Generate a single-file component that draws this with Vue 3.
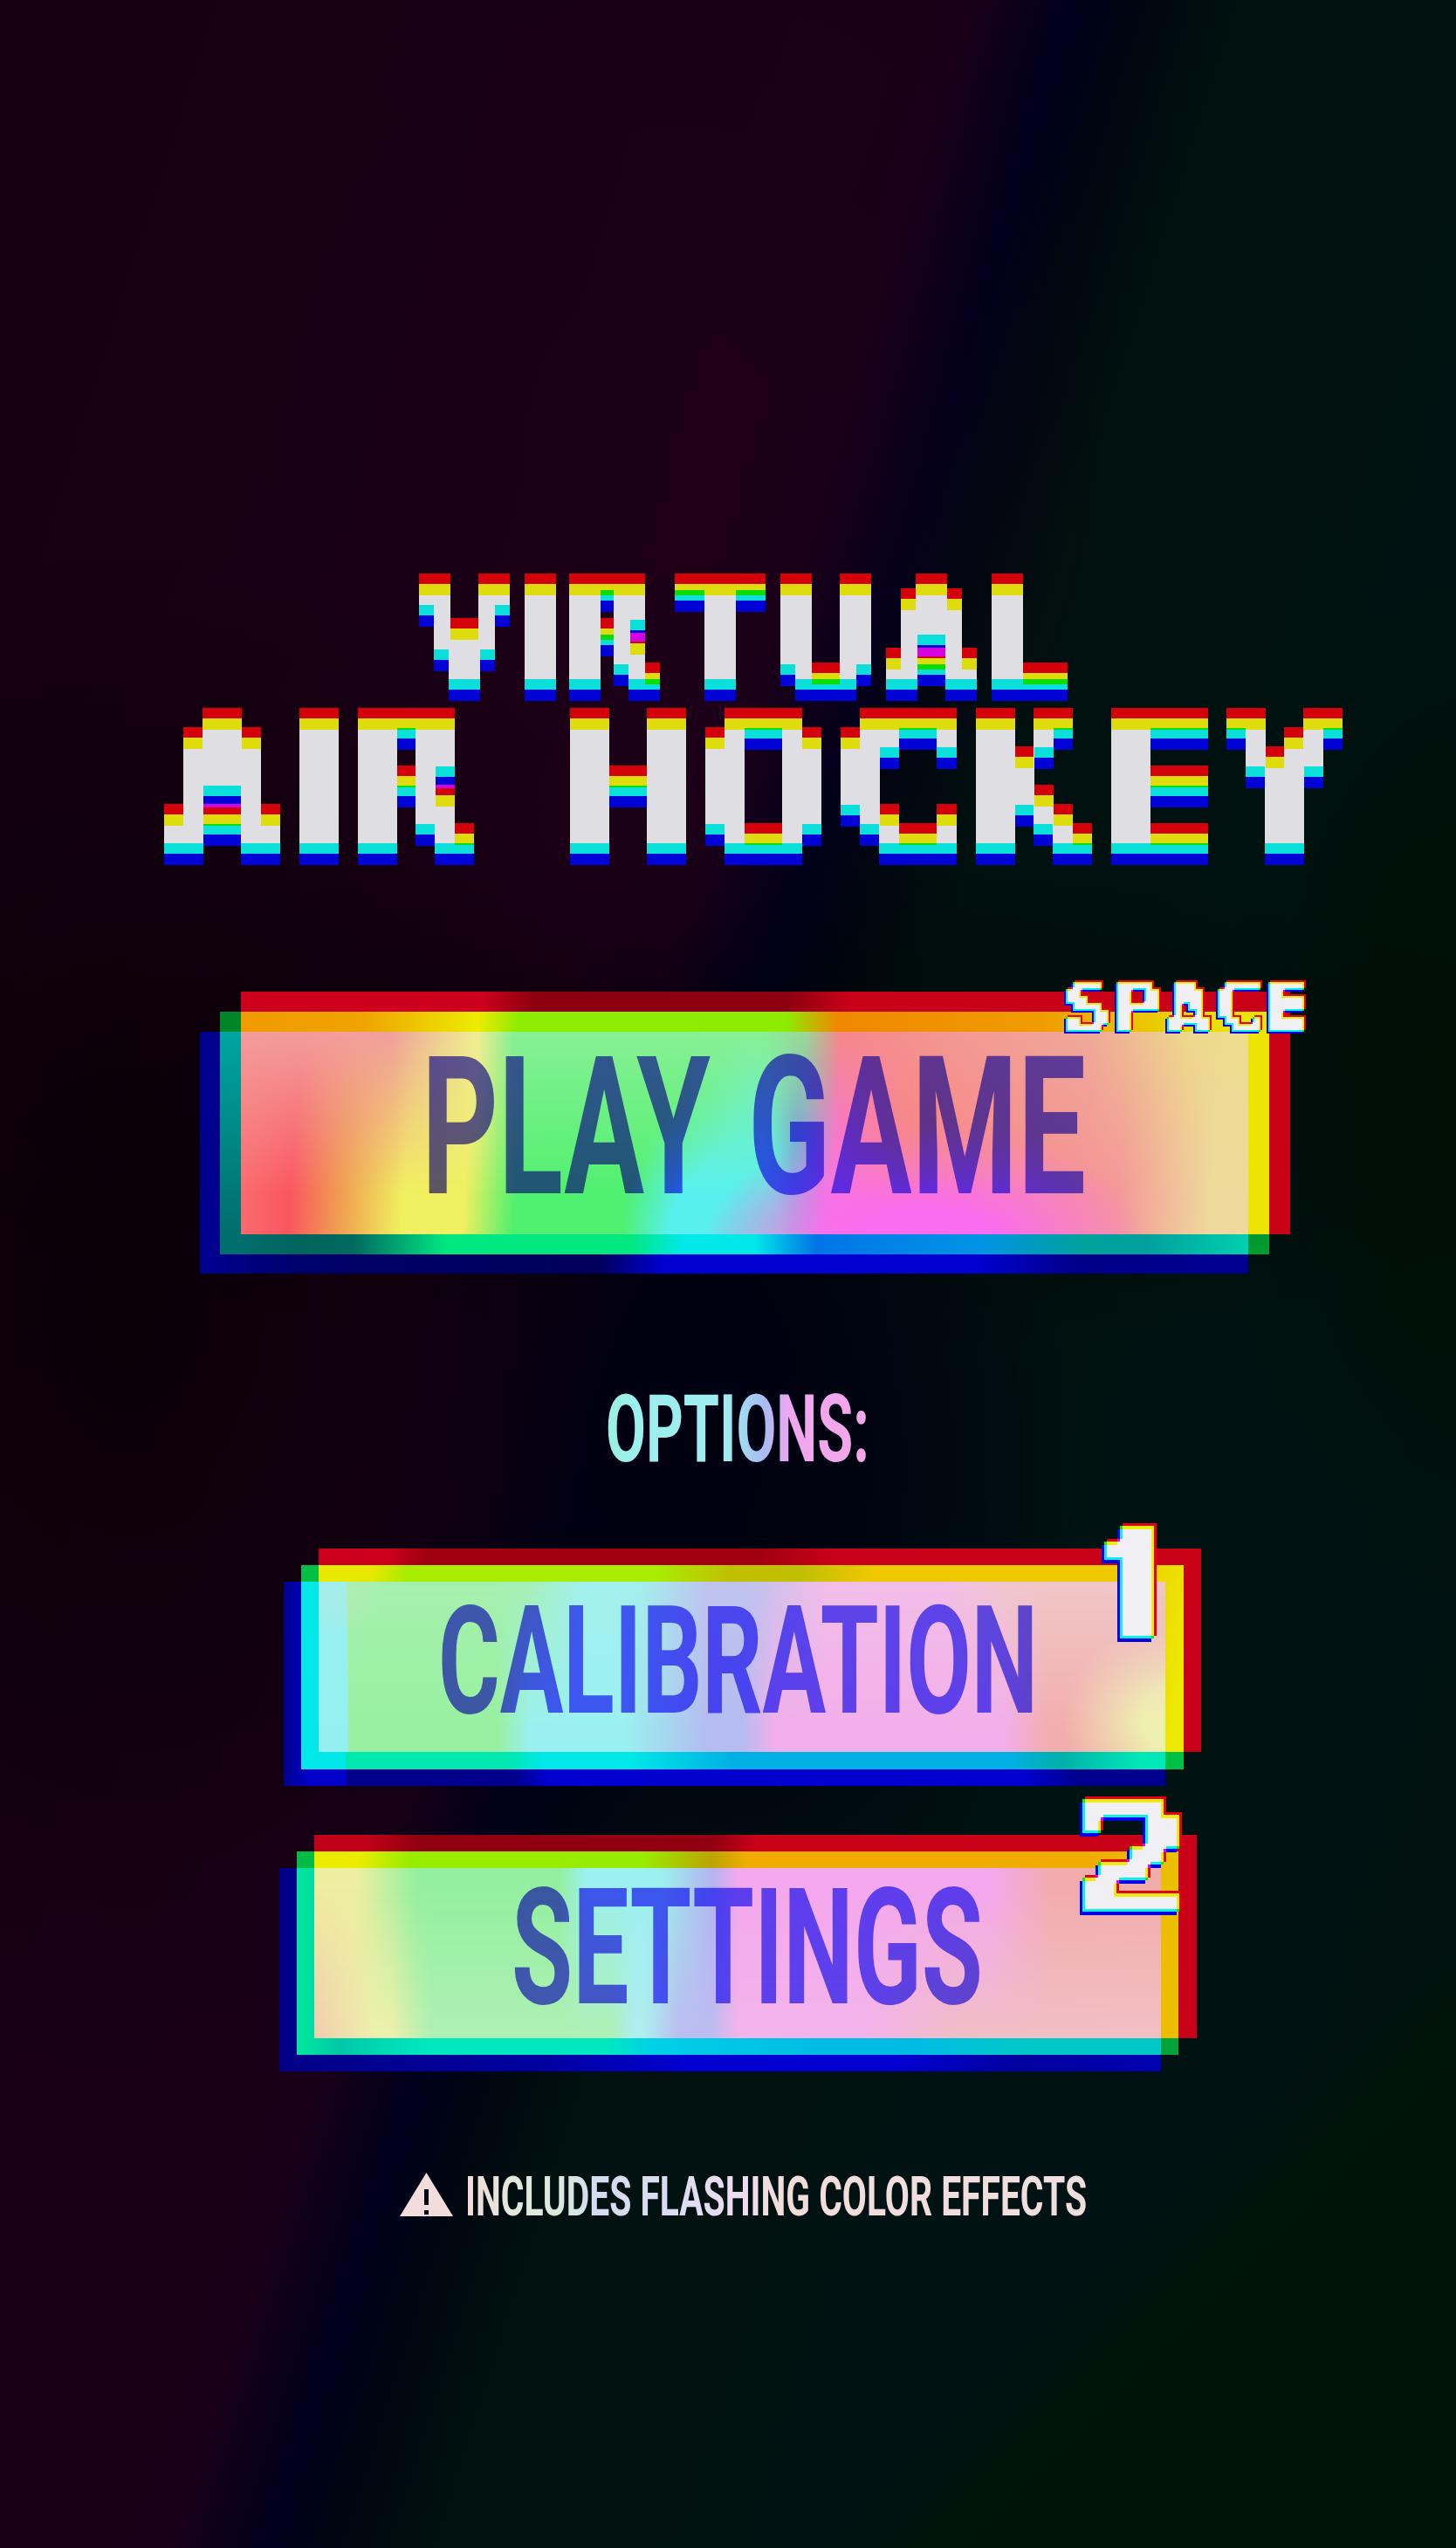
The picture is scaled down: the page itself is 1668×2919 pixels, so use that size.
<script setup>
// Ink extents of the display face, in thousandths of an em: [left, right, width in cells]
const face = {
  A: [4, 770, 6], C: [50, 680, 6], E: [92, 623, 5], H: [92, 745, 6], I: [92, 280, 2],
  K: [92, 790, 6], L: [92, 623, 5], O: [50, 800, 6], P: [92, 686, 6], R: [92, 755, 6],
  S: [60, 658, 6], T: [5, 677, 6], U: [92, 720, 6], V: [5, 769, 6], Y: [-8, 733, 6],
  2: [73, 615, 6], 1: [60, 385, 3]
}
const blocks = (word, cell) =>
  [...word].map((ch) => {
    if (ch === ' ') return { ch, space: true }
    const [l, r, cols] = face[ch]
    const digit = ch === '1'
    const size = (7 * cell) / (digit ? 0.711 : 0.729)
    const sx = (cols * cell) / (((r - l) / 1000) * size)
    let transform = `translateX(${(-l / 1000) * size * sx}px) scaleX(${sx})`
    if (ch === 'A') {
      // A is stretched wider towards its tip, so that its sides stand more upright
      const q = 1.45
      const k = (q - 1) / (7 * cell)
      const mid = (cols * cell) / 2
      const m = [q, 0, 0, 0, 0, q, 0, k, 0, 0, 1, 0, 0, 0, 0, 1]
      transform = `translateX(${mid}px) matrix3d(${m.join(',')}) translateX(${-mid}px) ${transform}`
    }
    return { ch, digit, cols, style: { fontSize: size + 'px', transform } }
  })
const filters = [
  { id: 'px17', c: 17, r: 9, dx: 0, dy: 12.5, v: 223 },
  { id: 'px22', c: 22, r: 11, dx: 0, dy: 12.5, v: 223 },
  { id: 'px8', c: 8, r: 4, dx: 2, dy: 2, v: 240 },
  { id: 'px18', c: 18, r: 10, dx: 3, dy: 3.5, v: 240 }
]
const title = [
  { cls: 'l1', glyphs: blocks('VIRTUAL', 17) },
  { cls: 'l2', glyphs: blocks('AIR HOCKEY', 22) }
]
const buttons = [
  {
    cls: 'play', w: 1154, h: 232, size: 221, base: 185,
    words: [{ t: 'PLAY', x: 207, len: 331 }, { t: 'GAME', x: 581, len: 387 }],
    key: blocks('SPACE', 8), badge: 'space'
  },
  {
    cls: 'cal', w: 970, h: 195, size: 173, base: 150,
    words: [{ t: 'CALIBRATION', x: 137, len: 687 }],
    key: blocks('1', 18), badge: 'one'
  },
  {
    cls: 'set', w: 970, h: 195, size: 186, base: 154.5,
    words: [{ t: 'SETTINGS', x: 226, len: 540 }],
    key: blocks('2', 18), badge: 'two'
  }
]
</script>

<template>
  <main class="screen">
    <svg class="defs" width="0" height="0" aria-hidden="true">
      <filter v-for="f in filters" :id="f.id" :key="f.id" filterUnits="userSpaceOnUse" primitiveUnits="userSpaceOnUse"
        x="-30" y="-30" width="240" height="240" color-interpolation-filters="sRGB">
        <feFlood :x="Math.floor(f.c / 2)" :y="Math.floor(f.c / 2)" width="1" height="1" flood-color="#000" result="dot" />
        <feComposite in="dot" in2="dot" operator="over" x="0" y="0" :width="f.c" :height="f.c" result="cell" />
        <feTile in="cell" x="0" y="0" :width="f.c * 6" :height="f.c * 7" result="grid" />
        <feComposite in="SourceAlpha" in2="grid" operator="in" result="hit" />
        <feComponentTransfer in="hit" result="solid"><feFuncA type="discrete" tableValues="0 1" /></feComponentTransfer>
        <feMorphology in="solid" operator="dilate" :radius="f.r" x="-30" y="-30" width="240" height="240" result="m" />
        <feFlood :flood-color="`rgb(${f.v - 11},0,10)`" x="-30" y="-30" width="240" height="240" />
        <feComposite in2="m" operator="in" />
        <feOffset :dx="f.dx" :dy="-f.dy" result="r" />
        <feFlood :flood-color="`rgb(11,${f.v - 3},4)`" x="-30" y="-30" width="240" height="240" />
        <feComposite in2="m" operator="in" result="g" />
        <feFlood :flood-color="`rgb(0,3,${f.v - 10})`" x="-30" y="-30" width="240" height="240" />
        <feComposite in2="m" operator="in" />
        <feOffset :dx="-f.dx" :dy="f.dy" result="b" />
        <feComposite in="r" in2="g" operator="arithmetic" k1="0" k2="1" k3="1" k4="0" result="rg" />
        <feComposite in="rg" in2="b" operator="arithmetic" k1="0" k2="1" k3="1" k4="0" />
      </filter>
    </svg>

    <h1 class="title">
      <span v-for="line in title" :key="line.cls" class="line" :class="line.cls"><span
        v-for="(g, i) in line.glyphs" :key="i" class="glyph" :class="g.space ? 'gap' : 'c' + g.cols"><span
        class="ink" :style="g.style">{{ g.ch }}</span></span></span>
    </h1>

    <template v-for="(b, n) in buttons" :key="b.cls">
      <h2 v-if="n === 1" class="options">
        <svg width="340" height="140" viewBox="0 0 340 140">
          <defs>
            <linearGradient id="optFill">
              <stop offset="0" stop-color="#9af0dc" /><stop offset=".1" stop-color="#9cf0ee" />
              <stop offset=".46" stop-color="#a0ecf0" /><stop offset=".6" stop-color="#a8bcf2" />
              <stop offset=".7" stop-color="#f0a6f0" /><stop offset="1" stop-color="#f4a8e8" />
            </linearGradient>
          </defs>
          <text class="din" x="8" y="107" font-size="107" textLength="302" lengthAdjust="spacingAndGlyphs" fill="url(#optFill)">OPTIONS:</text>
        </svg>
      </h2>
      <button class="btn" :class="b.cls">
        <i class="r"></i><i class="b"></i><i class="g"></i><i class="rg"></i><i class="gb"></i><i class="rgb"></i>
        <svg class="label" :viewBox="`0 0 ${b.w} ${b.h}`" :width="b.w" :height="b.h">
          <text class="din" :font-size="b.size"><tspan v-for="w in b.words" :key="w.t" :x="w.x" :y="b.base"
            :textLength="w.len" lengthAdjust="spacingAndGlyphs">{{ w.t }}</tspan></text>
        </svg>
        <kbd class="key" :class="b.badge"><span v-for="(g, i) in b.key" :key="i" class="glyph"><span
          class="ink" :class="{ digit: g.digit }" :style="g.style">{{ g.ch }}</span></span></kbd>
      </button>
    </template>

    <p class="warn">
      <svg width="820" height="80" viewBox="0 0 820 80">
        <defs>
          <linearGradient id="warnFill" gradientUnits="userSpaceOnUse" x1="78" y1="0" x2="785" y2="0">
            <stop offset="0" stop-color="#f2dcd8" /><stop offset=".08" stop-color="#e2e8dc" />
            <stop offset=".16" stop-color="#d8e8dc" /><stop offset=".2" stop-color="#d4dcf0" />
            <stop offset=".34" stop-color="#dcdcf2" /><stop offset=".45" stop-color="#f0dcf0" />
            <stop offset=".5" stop-color="#f2dcdc" /><stop offset="1" stop-color="#f0dede" />
          </linearGradient>
        </defs>
        <path fill="#f2dcdc" fill-rule="evenodd" d="M30.5 2 61 52H0zM28 21v18h5V21zM28 45v5h5v-5z" />
        <text class="din" x="75" y="51" font-size="63" textLength="712" lengthAdjust="spacingAndGlyphs" fill="url(#warnFill)">INCLUDES FLASHING COLOR EFFECTS</text>
      </svg>
    </p>
  </main>
</template>

<style>
body { background: #000; }
</style>

<style scoped>
.screen {
  width: 1668px;
  height: 2919px;
  overflow: hidden;
  display: flex;
  flex-direction: column;
  align-items: flex-start;
  background:
    radial-gradient(ellipse 420px 620px at 820px 1680px, rgba(0, 0, 16, .9) 30%, transparent),
    radial-gradient(ellipse 1100px 300px at 50% 1270px, rgba(0, 0, 0, .45), transparent),
    radial-gradient(ellipse 620px 900px at 150px 1500px, rgba(0, 0, 0, .6), transparent),
    radial-gradient(ellipse 520px 620px at 780px 520px, rgba(36, 0, 26, .35), transparent),
    linear-gradient(135deg, transparent 84%, #001404 89%),
    radial-gradient(ellipse 300px 600px at 1690px 1250px, #001002, transparent),
    linear-gradient(107.5deg, #14000f 0, #1a0016 38%, #190018 43%, #00001c 47.5%, #00060f 50.5%, #00110f 55%, #001212 80%, #00100e 100%);
}
.defs { position: absolute; }
.title { margin: 670px 0 0; font: bold 100px "DejaVu Sans", sans-serif; }
.line { display: flex; }
.l1 { height: 153px; margin-left: 480.5px; gap: 17px; }
.l1 .glyph { width: 104px; height: 119px; filter: url(#px17); }
.l1 .glyph.c2 { width: 34px; }
.l1 .glyph.c5 { width: 86px; }
.l2 { height: 155px; margin-left: 188px; gap: 21.5px; }
.l2 .glyph { width: 133.5px; height: 154px; filter: url(#px22); }
.l2 .glyph.c2 { width: 45px; }
.l2 .glyph.c5 { width: 110.5px; }
.l2 .glyph.gap { width: 67px; filter: none; }
.ink {
  display: block;
  width: max-content;
  line-height: .766;
  transform-origin: 0 0;
  font-family: "DejaVu Sans", sans-serif;
  font-weight: bold;
  color: #eee;
}
.ink.digit { font-family: Roboto, sans-serif; font-weight: 900; line-height: .739; -webkit-text-stroke: 12px #eee; }

.btn {
  position: relative;
  display: grid;
  isolation: isolate;
  padding: 0;
  border: 0;
  background: none;
}
.btn i { display: block; }
.btn .b { grid-area: 3 / 1 / 6 / 4; }
.btn .g { grid-area: 2 / 2 / 5 / 5; }
.btn .r { grid-area: 1 / 3 / 4 / 6; }
.btn .rg { grid-area: 2 / 3 / 4 / 5; }
.btn .gb { grid-area: 3 / 2 / 5 / 4; }
.btn .rgb { grid-area: 3 / 3 / 4 / 4; position: relative; }
.btn .rgb::after { content: ""; position: absolute; inset: 0; }
.label { grid-area: 3 / 3 / 4 / 4; mix-blend-mode: multiply; overflow: visible; }
.label .din { fill: rgb(98, 92, 255); }
.din { font-family: Roboto, "Liberation Sans", sans-serif; font-weight: 700; }

.play {
  margin: 158px 0 0 229px;
  grid-template: 23px 23px 232px 23px 22px / 23px 24px 1154px 24px 24px;
}
.play .r { background: linear-gradient(90deg, #cc001c 0 23%, #8c0010 28% 52%, #c80018 58%); }
.play .b { background: linear-gradient(90deg, #000092 0, #00006a 10%, #00005a 38%, #0000d0 44% 74%, #000088 84%, #000090); }
.play .g { background: linear-gradient(#008628 60%, #009c32); }
.play .rg { background: linear-gradient(90deg, #f09a00 0, #f0a400 12%, #ecec00 23%, #8eec00 27% 53%, #f08800 58%, #f09c00 78%, #e8dc00 93%, #ece400 98%); }
.play .gb { background: linear-gradient(90deg, transparent 24px, #00645c 8%, #006a60 13%, #00e880 22% 40%, #00e8e8 45% 52%, #0074e8 58%, #0094e4 74%, #00a09c 84% 90%, #00d0b0), linear-gradient(#00a4a0, #006e6c 90%); }
.play .rgb { background: linear-gradient(90deg, #f49c9c 0, #f2a09c 15%, #eed296 20%, #f0ee96 23.5%, #88f094 27% 52%, #9cd896 56%, #f68888 59.5%, #f49a94 72%, #f0a898 84%, #eed88c 94%, #eede90); }
.play .rgb::after {
  background:
    radial-gradient(ellipse 260px 160px at 68% 112%, #fa6cf0 35%, rgba(248, 120, 220, .6) 70%, transparent),
    radial-gradient(ellipse 120px 200px at 48% 112%, #58f0ee 55%, transparent),
    linear-gradient(94deg, #fa7070 0, #fa5660 6%, #f0a050 11%, #f0f060 17% 23%, #50f070 28% 44%, #58f0ee 50% 52%, #7090f0 55%, #fa6cf0 59%, #f88080 66%, #f49898 87%, #eed89c 96%);
  -webkit-mask-image: linear-gradient(transparent, #000 80%);
  mask-image: linear-gradient(transparent, #000 80%);
}
.options { margin: 108px 0 0 686px; height: 125px; }
.options svg, .warn svg { display: block; }
.cal {
  margin: 82px 0 0 325px;
  grid-template: 19px 19px 195px 20px 19px / 20px 20px 970px 21px 20px;
}
.cal .r { background: linear-gradient(90deg, #cc001c 0 8%, #a00010 12% 50%, #c80018 58%); }
.cal .b { background: linear-gradient(90deg, #000090 0, #0000c8 3% 7%, #00008c 7.2% 26%, #0000d0 30% 84%, #000090 90%); }
.cal .g { background: #00c044; }
.cal .rg { background: linear-gradient(100deg, #e8e800 0 6%, #a8ec00 10% 38%, #c0c000 46% 54%, #f0c800 62% 90%, #ece800 98%); }
.cal .gb { background: linear-gradient(90deg, #00e8e8 0 5%, #00e8b0 5.3% 24%, #00e8e8 28% 38%, #00b0e4 50% 82%, #00b0a8 88%, #00e8b8 97%); }
.cal .rgb { background: linear-gradient(90deg, #98f0ee 0 3.2%, #a8f0b0 3.4% 25%, #a4f0ee 31% 38%, #c2c4ee 46% 52%, #f2c0e8 60% 74%, #f0caca 81%); }
.cal .rgb::after {
  background:
    radial-gradient(ellipse 150px 130px at 102% 80%, #eef0b0 30%, transparent 90%),
    radial-gradient(circle 60px at 1.5% 0, #f4dcd0, transparent),
    linear-gradient(90deg, #94f0f0 0 3.4%, #98f0a0 3.6% 21%, #9af0f0 25% 36%, #b4bcf0 46% 50%, #f2aeea 54% 81%, #f2aeae 86%);
  -webkit-mask-image: linear-gradient(rgba(0, 0, 0, .1), #000 85%);
  mask-image: linear-gradient(rgba(0, 0, 0, .1), #000 85%);
}
.set {
  margin: 56px 0 0 320px;
  grid-template: 19px 19px 195px 19px 19px / 20px 20px 970px 20px 21px;
}
.set .r { background: linear-gradient(90deg, #c00018 0 6%, #900010 12% 45%, #c80018 50%); }
.set .b { background: linear-gradient(90deg, #000088, #0000a0 30%, #0000d0 46% 70%, #0000a0 84%, #0000b0); }
.set .g { background: linear-gradient(90deg, #00bc44, #00a43a); }
.set .rg { background: linear-gradient(90deg, #ecec00 0 5%, #98ec00 11% 38%, #bca400 46%, #f0ac00 50% 90%, #ecc000); }
.set .gb { background: linear-gradient(90deg, #00e8a0 0, #00c8a8 5%, #00e8c0 15% 36%, #00d0e8 41%, #00bce4 60% 72%, #00c8c8 84%); }
.set .rgb { background: linear-gradient(90deg, #eeeea0 0 5%, #94f0a0 12% 29%, #9cf0ee 32% 41%, #b4b4f0 47%, #f4a8ee 50% 80%, #f2acac 87%); }
.set .rgb::after {
  background: linear-gradient(90deg, #f0ccae 0, #eef0ac 7% 9%, #aef0b4 14% 35%, #b0ecf0 38% 39%, #bcbcf0 43% 47%, #f2b4ea 50% 65%, #f0bec4 76%, #f2c0c4 100%);
  -webkit-mask-image: linear-gradient(transparent 10%, #000);
  mask-image: linear-gradient(transparent 10%, #000);
}

.key { position: absolute; display: flex; font: bold 60px "DejaVu Sans", sans-serif; text-align: left; }
.space { left: 992px; top: -11px; gap: 9.5px; }
.space .glyph { width: 48.6px; height: 56px; filter: url(#px8); }
.one { left: 941px; top: -25px; }
.one .glyph { width: 56px; height: 126px; filter: url(#px18); }
.two { left: 921px; top: -40px; }
.two .glyph { width: 108px; height: 126px; filter: url(#px18); }

.warn { margin: 114px 0 0 458px; }
</style>
